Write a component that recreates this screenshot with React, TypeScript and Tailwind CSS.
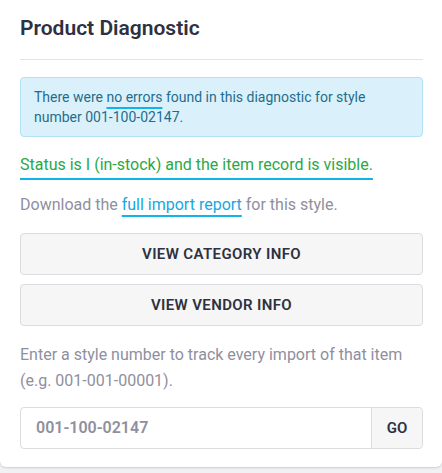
const App = () => {
  return (
    <div className="w-[442px] h-[473px] bg-[#f1f1f3] font-['Roboto',sans-serif]">
      <div className="w-[442px] h-[467px] bg-white rounded-br-md rounded-bl-md shadow-[0_1px_2px_rgba(0,0,0,0.15)] pl-5 pr-[19px] pt-[14px]">
        <h2 className="text-[21px] font-semibold text-[#2e3140] leading-7">
          Product Diagnostic
        </h2>
        <div className="mt-[17px] border-t border-[#e3e3e6]" />

        <div className="mt-[17px] rounded border border-[#b3e1f5] bg-[#daf1fc] px-[13px] pt-[9px] pb-[9px] text-[14px] leading-5 text-[#1f6d8c]">
          There were{" "}
          <span className="underline decoration-[#0fb4ea] decoration-2 underline-offset-[5px]">
            no errors
          </span>{" "}
          found in this diagnostic for style number 001-100-02147.
        </div>

        <p className="mt-[16px] text-[16px] leading-6 text-[#2aa845]">
          <span className="underline decoration-[#0fb4ea] decoration-2 underline-offset-[8px]">
            Status is I (in-stock) and the item record is visible.
          </span>
        </p>

        <p className="mt-[16px] text-[16px] leading-6 text-[#8f8f9e]">
          Download the{" "}
          <a className="text-[#1aa6e0] underline decoration-[#0fb4ea] decoration-2 underline-offset-[5px]">
            full import report
          </a>{" "}
          for this style.
        </p>

        <div className="mt-[16px] flex flex-col gap-[9px]">
          <button className="h-[42px] w-full rounded border border-[#dcdce0] bg-[#f6f6f7] text-[15px] font-semibold tracking-wide text-[#2e3140]">
            VIEW CATEGORY INFO
          </button>
          <button className="h-[42px] w-full rounded border border-[#dcdce0] bg-[#f6f6f7] text-[15px] font-semibold tracking-wide text-[#2e3140]">
            VIEW VENDOR INFO
          </button>
        </div>

        <p className="mt-[16px] text-[16px] leading-[26px] text-[#8f8f9e]">
          Enter a style number to track every import of that item (e.g. 001-001-00001).
        </p>

        <div className="mt-[13px] flex h-[42px] rounded border border-[#dcdce0]">
          <input
            className="flex-1 min-w-0 rounded-l px-[15px] text-[16px] font-semibold text-[#2e3140] placeholder:text-[#8f8f9e] outline-none"
            placeholder="001-100-02147"
          />
          <button className="w-[51px] border-l border-[#dcdce0] bg-[#f6f6f7] rounded-r text-[15px] font-semibold text-[#2e3140]">
            GO
          </button>
        </div>
      </div>
    </div>
  );
};

export default App;
